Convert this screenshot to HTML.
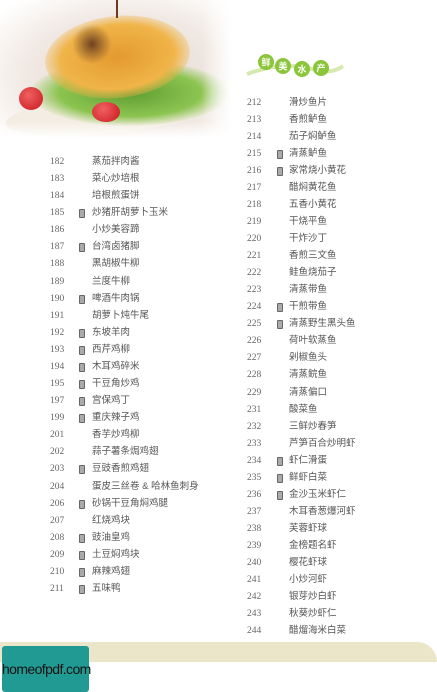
<!DOCTYPE html>
<html><head><meta charset="utf-8">
<style>
body{margin:0;width:437px;height:692px;background:#fff;position:relative;overflow:hidden;font-family:"Liberation Serif","Noto Serif CJK SC",serif;}
.row{position:absolute;height:14px;font-size:9.5px;color:#555;line-height:14px;white-space:nowrap}
.row .n{position:absolute;left:0;color:#666;font-size:9.5px}
.row .i{position:absolute;width:4px;height:7px;border:1px solid #666;background:#aaa;border-radius:1px;top:3px}
.row .t{position:absolute;font-family:"Liberation Sans","Noto Sans CJK SC",sans-serif;color:#555}
.photo{position:absolute;left:0;top:0;width:232px;height:138px;overflow:hidden}
.c{position:absolute;border-radius:50%}
</style></head><body>
<div class="photo">
 <div style="position:absolute;inset:0;background:radial-gradient(ellipse at 55% 55%,#e6d9d0 0%,#f0e8e2 55%,#fff 92%)"></div>
 <div class="c" style="left:5px;top:92px;width:225px;height:40px;background:#f4ede3;transform:rotate(-6deg)"></div>
 <div class="c" style="left:30px;top:60px;width:200px;height:66px;background:radial-gradient(ellipse,#5f9e32 0%,#8cc450 50%,rgba(150,200,90,0) 72%)"></div>
 <div class="c" style="left:45px;top:16px;width:145px;height:82px;background:radial-gradient(ellipse,#e39a30 0%,#f0b448 55%,rgba(240,185,80,0) 78%);transform:rotate(-6deg)"></div>
 <div class="c" style="left:72px;top:24px;width:40px;height:40px;background:radial-gradient(ellipse,rgba(80,40,25,.8),rgba(80,40,25,0) 70%)"></div>
 <div style="position:absolute;left:116px;top:0;width:2px;height:18px;background:#6a3a22"></div>
 <div class="c" style="left:19px;top:87px;width:24px;height:23px;background:radial-gradient(circle at 40% 35%,#f06060,#c81820)"></div>
 <div class="c" style="left:92px;top:102px;width:28px;height:20px;background:radial-gradient(circle at 40% 35%,#f06060,#c81820)"></div>
 <div style="position:absolute;right:0;top:0;width:30px;height:138px;background:linear-gradient(90deg,rgba(255,255,255,0),#fff)"></div>
 <div style="position:absolute;left:0;bottom:0;width:232px;height:16px;background:linear-gradient(rgba(255,255,255,0),#fff)"></div>
</div>
<svg style="position:absolute;left:245px;top:52px" width="100" height="30">
 <path d="M2 22 Q40 8 70 18 Q88 22 98 14" stroke="#d6eab0" stroke-width="4" fill="none"/>
 <g font-family="Liberation Sans,Noto Sans CJK SC,sans-serif" font-size="9" font-weight="bold" fill="#fff" text-anchor="middle">
 <circle cx="21" cy="10" r="8" fill="#8ac53a"/><text x="21" y="13.5">鲜</text>
 <circle cx="38" cy="14" r="8" fill="#8ac53a"/><text x="38" y="17.5">美</text>
 <circle cx="57" cy="17" r="8" fill="#8ac53a"/><text x="57" y="20.5">水</text>
 <circle cx="76" cy="16" r="8" fill="#8ac53a"/><text x="76" y="19.5">产</text></g>
</svg>
<div id="L"></div>
<div style="position:absolute;left:0;top:642px;width:437px;height:20px;background:#ebe6c9;border-top-right-radius:20px"></div>
<div style="position:absolute;left:2px;top:646px;width:87px;height:46px;background:#229a94;border-radius:3px;font-family:'Liberation Sans',sans-serif;font-size:14px;color:#111;line-height:46px;text-align:center;letter-spacing:-0.6px">homeofpdf.com</div>
<script>
var L=[["182","蒸茄拌肉酱",0],["183","菜心炒培根",0],["184","培根煎蛋饼",0],["185","炒猪肝胡萝卜玉米",1],["186","小炒美容蹄",0],["187","台湾卤猪脚",1],["188","黑胡椒牛柳",0],["189","兰度牛柳",0],["190","啤酒牛肉锅",1],["191","胡萝卜炖牛尾",0],["192","东坡羊肉",1],["193","西芹鸡柳",1],["194","木耳鸡碎米",1],["195","干豆角炒鸡",1],["197","宫保鸡丁",1],["199","重庆辣子鸡",1],["201","香芋炒鸡柳",0],["202","蒜子薯条焗鸡翅",0],["203","豆豉香煎鸡翅",1],["204","蛋皮三丝卷 & 哈林鱼刺身",0],["206","砂锅干豆角焖鸡腿",1],["207","红烧鸡块",0],["208","豉油皇鸡",1],["209","土豆焖鸡块",1],["210","麻辣鸡翅",1],["211","五味鸭",1]];
var R=[["212","滑炒鱼片",0],["213","香煎鲈鱼",0],["214","茄子焖鲈鱼",0],["215","清蒸鲈鱼",1],["216","家常烧小黄花",1],["217","醋焖黄花鱼",0],["218","五香小黄花",0],["219","干烧平鱼",0],["220","干炸沙丁",0],["221","香煎三文鱼",0],["222","鲑鱼烧茄子",0],["223","清蒸带鱼",0],["224","干煎带鱼",1],["225","清蒸野生黑头鱼",1],["226","荷叶软蒸鱼",0],["227","剁椒鱼头",0],["228","清蒸鲩鱼",0],["229","清蒸偏口",0],["231","酸菜鱼",0],["232","三鲜炒春笋",0],["233","芦笋百合炒明虾",0],["234","虾仁滑蛋",1],["235","鲜虾白菜",1],["236","金沙玉米虾仁",1],["237","木耳香葱爆河虾",0],["238","芙蓉虾球",0],["239","金榜题名虾",0],["240","樱花虾球",0],["241","小炒河虾",0],["242","银芽炒白虾",0],["243","秋葵炒虾仁",0],["244","醋熘海米白菜",0]];
var h="";
function put(a,x,y0,st,ix,tx){a.forEach(function(r,k){var y=y0+k*st;h+='<div class="row" style="left:'+x+'px;top:'+(y-6)+'px;width:200px"><span class="n">'+r[0]+'</span>'+(r[2]?'<span class="i" style="left:'+ix+'px"></span>':'')+'<span class="t" style="left:'+tx+'px">'+r[1]+'</span></div>';});}
put(L,50,161,17.08,29,42);put(R,247,102,17.03,30,42);
document.getElementById("L").innerHTML=h;
</script>
</body></html>
